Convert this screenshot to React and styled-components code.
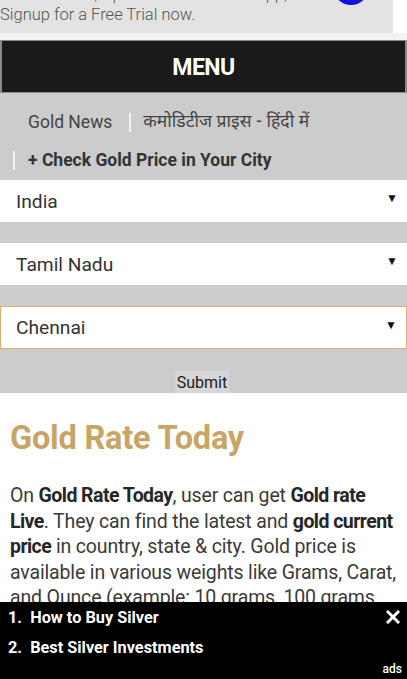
import React from "react";
import styled, { createGlobalStyle } from "styled-components";

const Global = createGlobalStyle`
  html, body { margin: 0; padding: 0; background: #fff; }
  body { font-family: Roboto, "Noto Sans", "Noto Sans Devanagari", sans-serif; width: 407px; overflow-x: hidden; }
  * { box-sizing: border-box; }
`;

const AdTop = styled.div`
  display: flex;
  background: #fff;
`;
const AdBox = styled.div`
  position: relative;
  width: 393px;
  height: 33px;
  background: #e3e3e3;
  overflow: hidden;
  display: flex;
  flex-direction: column;
  justify-content: flex-end;
  padding: 0 0 8px 0;
`;
const AdLine = styled.div`
  font-size: 16.5px;
  font-weight: 300;
  line-height: 20px;
  color: #555;
  white-space: nowrap;
`;
const AdDot = styled.div`
  position: absolute;
  left: 333px;
  top: -31px;
  width: 36px;
  height: 36px;
  border-radius: 50%;
  background: #1010e0;
`;
const Spacer = styled.div`
  height: 7px;
  background: #f2f2f2;
`;
const MenuBar = styled.div`
  height: 53px;
  background: #1a1a1a;
  border: 1px solid #8a8a8a;
  border-left-width: 2px;
  border-right-width: 2px;
  display: flex;
  align-items: center;
  justify-content: center;
  padding-top: 2px;
  color: #fff;
  font-size: 23px;
  font-weight: 700;
  letter-spacing: -0.5px;
`;
const Nav = styled.div`
  background: #cccccc;
  padding-top: 10px;
`;
const NavRow = styled.div`
  display: flex;
  align-items: center;
  height: 38px;
  padding-left: ${(p) => p.$pad}px;
`;
const NavLink = styled.span`
  font-size: 17.5px;
  font-weight: ${(p) => (p.$bold ? 700 : 400)};
  color: ${(p) => (p.$bold ? "#333" : "#444")};
`;
const Sep = styled.span`
  width: 2px;
  height: 19px;
  background: #f4f4f4;
  margin: 0 ${(p) => p.$r}px 0 ${(p) => p.$l}px;
`;
const Hindi = styled.span`
  font-size: 17.5px;
  color: #444;
  font-family: "Noto Sans Devanagari", "Lohit Devanagari", "Noto Sans", sans-serif;
`;
const Selects = styled.div`
  display: flex;
  flex-direction: column;
  gap: 21px;
  padding-top: 1px;
`;
const Select = styled.div`
  height: ${(p) => (p.$active ? 43 : 42)}px;
  background: #fff;
  border: ${(p) => (p.$active ? "1px solid #dcae74" : "none")};
  display: flex;
  align-items: center;
  justify-content: space-between;
  padding: 0 9px 0 ${(p) => (p.$active ? 15 : 16)}px;
  font-size: 19.2px;
  color: #333;
`;
const Arrow = styled.span`
  font-size: 12px;
  color: #111;
  margin-top: -6px;
`;
const SubmitRow = styled.div`
  display: flex;
  justify-content: center;
  padding-top: 22px;
  padding-right: 3px;
`;
const SubmitBtn = styled.div`
  height: 22px;
  width: 54px;
  background: #d6d6d6;
  font-size: 16px;
  color: #222;
  display: flex;
  align-items: center;
  justify-content: center;
`;
const Content = styled.div`
  padding: 26px 6px 90px 10px;
`;
const Title = styled.h1`
  margin: 0;
  font-size: 32.5px;
  line-height: 38px;
  font-weight: 700;
  color: #c8a466;
  letter-spacing: -0.2px;
`;
const Para = styled.p`
  margin: 26px 0 0;
  font-size: 19.5px;
  line-height: 25.6px;
  color: #3a3a3a;
  letter-spacing: -0.15px;
  b { font-weight: 700; color: #262626; letter-spacing: -0.55px; }
`;
const BottomAd = styled.div`
  position: fixed;
  left: 0;
  right: 0;
  bottom: 0;
  height: 77px;
  background: #000;
  padding: 1px 8px 0 8px;
`;
const AdItem = styled.div`
  color: #fff;
  font-size: 16.3px;
  font-weight: 700;
  line-height: 30px;
`;
const Close = styled.div`
  position: absolute;
  right: 7px;
  top: 7px;
  width: 14px;
  height: 14px;
`;
const AdsLabel = styled.div`
  position: absolute;
  right: 5px;
  bottom: 3px;
  color: #fff;
  font-size: 12px;
  font-weight: 500;
`;

export default function App() {
  return (
    <>
      <Global />
      <AdTop>
        <AdBox>
          <AdLine>Trade Stocks, Options &amp; Futures on app,</AdLine>
          <AdLine>Signup for a Free Trial now.</AdLine>
          <AdDot />
        </AdBox>
      </AdTop>
      <Spacer />
      <MenuBar>MENU</MenuBar>
      <Nav>
        <NavRow $pad={28}>
          <NavLink>Gold News</NavLink>
          <Sep $l={17} $r={12} />
          <Hindi>कमोडिटीज प्राइस - हिंदी में</Hindi>
        </NavRow>
        <NavRow $pad={0}>
          <Sep $l={13} $r={13} />
          <NavLink $bold>+ Check Gold Price in Your City</NavLink>
        </NavRow>
        <Selects>
          <Select>
            India<Arrow>▼</Arrow>
          </Select>
          <Select>
            Tamil Nadu<Arrow>▼</Arrow>
          </Select>
          <Select $active>
            Chennai<Arrow>▼</Arrow>
          </Select>
        </Selects>
        <SubmitRow>
          <SubmitBtn>Submit</SubmitBtn>
        </SubmitRow>
      </Nav>
      <Content>
        <Title>Gold Rate Today</Title>
        <Para>
          On <b>Gold Rate Today</b>, user can get <b>Gold rate Live</b>. They can
          find the latest and <b>gold current price</b> in country, state &amp;
          city. Gold price is available in various weights like Grams, Carat,
          and Ounce (example: 10 grams, 100 grams, 1kg, 1 ounce, 22 carat and
          24 carat gold). Users can also check the gold price history chart.
        </Para>
      </Content>
      <BottomAd>
        <AdItem>1.&nbsp; How to Buy Silver</AdItem>
        <AdItem>2.&nbsp; Best Silver Investments</AdItem>
        <Close>
          <svg width="14" height="14" viewBox="0 0 14 14">
            <path d="M2 2L12 12M12 2L2 12" stroke="#fff" strokeWidth="3" strokeLinecap="square" />
          </svg>
        </Close>
        <AdsLabel>ads</AdsLabel>
      </BottomAd>
    </>
  );
}
